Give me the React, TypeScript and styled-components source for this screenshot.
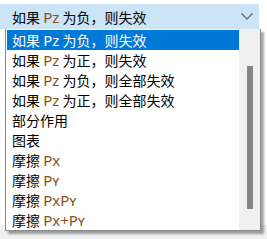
import { createGlobalStyle } from "styled-components";
import styled from "styled-components";

const GlobalStyle = createGlobalStyle`
  html, body {
    margin: 0;
    padding: 0;
    background: #ffffff;
  }
  body {
    font-family: "Noto Sans CJK SC", "Noto Sans", sans-serif;
  }
`;

interface Option {
  zh: string;
  latin?: string;
  tail?: string;
}

const options: Option[] = [
  { zh: "如果 ", latin: "Pz", tail: " 为负，则失效" },
  { zh: "如果 ", latin: "Pz", tail: " 为正，则失效" },
  { zh: "如果 ", latin: "Pz", tail: " 为负，则全部失效" },
  { zh: "如果 ", latin: "Pz", tail: " 为正，则全部失效" },
  { zh: "部分作用" },
  { zh: "图表" },
  { zh: "摩擦 ", latin: "Px" },
  { zh: "摩擦 ", latin: "Pʏ" },
  { zh: "摩擦 ", latin: "PxPʏ" },
  { zh: "摩擦 ", latin: "Px+Pʏ" },
];

const Page = styled.div`
  position: relative;
  width: 267px;
  height: 239px;
  display: flex;
  flex-direction: column;
  overflow: hidden;
`;

const Form = styled.div`
  flex: 1;
  padding-top: 4px;
`;

const Footer = styled.div`
  height: 14px;
  background: #f0f0f0;
`;

const Combo = styled.div`
  width: 259px;
  height: 25px;
  box-sizing: border-box;
  display: flex;
  align-items: center;
  justify-content: space-between;
  padding: 0 6px 0 12px;
  background: #cce4f7;
  font-size: 14px;
  color: #000000;
`;

const Latin = styled.span<{ $selected?: boolean }>`
  font-family: "Noto Sans", "DejaVu Sans", sans-serif;
  font-size: 15px;
  color: ${({ $selected }) => ($selected ? "#ffffff" : "#8a5218")};
`;

const Chevron = () => (
  <svg width="12" height="7" viewBox="0 0 12 7">
    <path d="M0.5 0.5 L6 6 L11.5 0.5" fill="none" stroke="#5f5f5f" strokeWidth="1.2" />
  </svg>
);

const Dropdown = styled.div`
  position: absolute;
  top: 29px;
  left: 5px;
  width: 254px;
  display: flex;
  border: 1px solid #8a8a8a;
  border-top: none;
  background: #ffffff;
  box-shadow: 3px 3px 2px rgba(0, 0, 0, 0.35);
`;

const List = styled.div`
  flex: 1;
  display: flex;
  flex-direction: column;
  padding: 1px 0 0 1px;
`;

const Row = styled.div<{ $selected?: boolean }>`
  height: 20px;
  display: flex;
  align-items: center;
  padding-left: 5px;
  font-size: 14px;
  white-space: pre;
  background: ${({ $selected }) => ($selected ? "#0078d7" : "transparent")};
  color: ${({ $selected }) => ($selected ? "#ffffff" : "#000000")};
`;

const Scrollbar = styled.div`
  width: 21px;
  background: #f0f0f0;
  position: relative;
`;

const Thumb = styled.div`
  position: absolute;
  left: 8px;
  top: 37px;
  width: 6px;
  height: 143px;
  background: #858585;
`;

const Label = ({ option, selected }: { option: Option; selected?: boolean }) => (
  <>
    {option.zh}
    {option.latin && <Latin $selected={selected}>{option.latin}</Latin>}
    {option.tail}
  </>
);

export default function App() {
  return (
    <Page>
      <GlobalStyle />
      <Form>
        <Combo>
          <span style={{ whiteSpace: "pre" }}>
            <Label option={options[0]} />
          </span>
          <Chevron />
        </Combo>
      </Form>
      <Footer />
      <Dropdown>
        <List>
          {options.map((o, i) => (
            <Row key={i} $selected={i === 0}>
              <Label option={o} selected={i === 0} />
            </Row>
          ))}
        </List>
        <Scrollbar>
          <Thumb />
        </Scrollbar>
      </Dropdown>
    </Page>
  );
}
